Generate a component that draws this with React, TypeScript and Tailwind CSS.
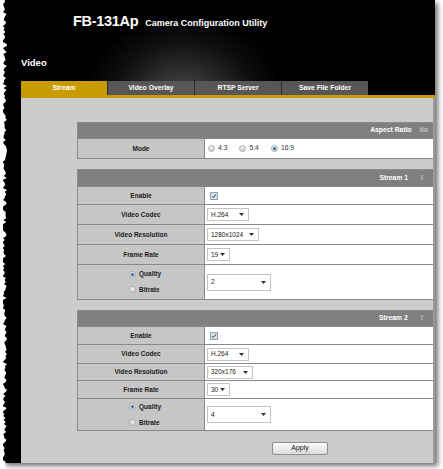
import React from 'react'

// jagged "torn paper" left edge of the screenshot
const tornPoints = (() => {
  let seed = 7
  const rnd = () => {
    seed = (seed * 9301 + 49297) % 233280
    return seed / 233280
  }
  const pts: string[] = ['0,0']
  for (let y = 0; y <= 469; y += 2) {
    pts.push(`${(2.5 + rnd() * 4.5).toFixed(1)},${y}`)
  }
  pts.push('0,469')
  return pts.join(' ')
})()

function Radio({ on = false }: { on?: boolean }) {
  return (
    <span className="inline-flex h-[7px] w-[7px] items-center justify-center rounded-full border border-[#a9a9a9] bg-gradient-to-b from-[#f4f4f4] to-[#d4d4d4]">
      {on && <span className="h-[3px] w-[3px] rounded-full bg-[#1f6fb8]" />}
    </span>
  )
}

function Check() {
  return (
    <span className="flex h-[8px] w-[8px] items-center justify-center border border-[#9aa3b0] bg-[#dde3ec]">
      <svg width="6" height="6" viewBox="0 0 6 6">
        <path d="M1 3.2 L2.4 4.6 L5 1.2" fill="none" stroke="#2a3a5a" strokeWidth="1" />
      </svg>
    </span>
  )
}

function Select({ value, w, tall = false }: { value: string; w: string; tall?: boolean }) {
  return (
    <div
      className={`flex items-center justify-between border border-[#c4c4c4] bg-white pl-[3px] pr-[4px] text-[6.5px] text-[#222] ${w} ${tall ? 'h-[17px]' : 'h-[13px]'}`}
    >
      <span>{value}</span>
      <svg width="5" height="3" viewBox="0 0 5 3">
        <path d="M0 0 H5 L2.5 3 Z" fill="#333" />
      </svg>
    </div>
  )
}

function Header({ title, tail, wide = false }: { title: string; tail: string; wide?: boolean }) {
  return (
    <div
      className={`flex h-full items-center justify-end bg-[#808080] text-[6.8px] font-bold text-white ${
        wide ? 'gap-[13px] pr-[12px]' : 'gap-[8px] pr-[7px]'
      }`}
    >
      <span>{title}</span>
      <span className="text-[#c8c8c8]">{tail}</span>
    </div>
  )
}

function Row({ h, label, children }: { h: string; label: React.ReactNode; children: React.ReactNode }) {
  return (
    <div className={`flex border-t border-[#8a8a8a] ${h}`}>
      <div className="flex w-[127px] shrink-0 items-center justify-center border-r border-[#8a8a8a] bg-[#c6c6c6] text-[6.5px] font-bold text-[#1a1a1a]">
        {label}
      </div>
      <div className="flex flex-1 items-center bg-white pl-[2px]">{children}</div>
    </div>
  )
}

type StreamProps = {
  name: string
  tail: string
  hs: string[]
  codec: string
  res: string
  resW: string
  fps: string
  q: string
}

function QB() {
  return (
    <div className="flex w-full flex-col gap-[6px] pl-[51px] text-[6.5px] font-bold">
      <div className="flex items-center gap-[3px]">
        <Radio on />
        <span>Quality</span>
      </div>
      <div className="flex items-center gap-[3px]">
        <Radio />
        <span>Bitrate</span>
      </div>
    </div>
  )
}

function Stream({ name, tail, hs, codec, res, resW, fps, q }: StreamProps) {
  return (
    <div className="w-[358px] border-b border-l border-t border-[#8a8a8a]">
      <div className={hs[0]}>
        <Header title={name} tail={tail} wide />
      </div>
      <Row h={hs[1]} label="Enable">
        <span className="pl-[3px]">
          <Check />
        </span>
      </Row>
      <Row h={hs[2]} label="Video Codec">
        <Select value={codec} w="w-[42px]" />
      </Row>
      <Row h={hs[3]} label="Video Resolution">
        <Select value={res} w={resW} />
      </Row>
      <Row h={hs[4]} label="Frame Rate">
        <Select value={fps} w="w-[23px]" />
      </Row>
      <Row h={hs[5]} label={<QB />}>
        <Select value={q} w="w-[64px]" tall />
      </Row>
    </div>
  )
}

const TABS = ['Stream', 'Video Overlay', 'RTSP Server', 'Save File Folder']

export default function App() {
  return (
    <div className="relative h-[469px] w-[443px] overflow-hidden bg-white font-['Liberation_Sans',Arial,sans-serif]">
      <div className="ml-[3px] h-[463px] w-[432px] bg-black shadow-[3px_3px_5px_rgba(0,0,0,0.55)]">
        {/* top banner */}
        <div className="relative h-[81px] overflow-hidden bg-black">
          <div className="absolute inset-0 bg-[radial-gradient(ellipse_100px_85px_at_180px_100px,rgba(130,130,130,0.6),rgba(50,50,50,0.3)_70%,transparent)]" />
          <div className="relative flex items-baseline gap-[7px] pl-[70px] pt-[11px] text-white">
            <span className="text-[14.5px] font-bold tracking-[-0.3px]">FB-131Ap</span>
            <span className="text-[9px] font-bold">Camera Configuration Utility</span>
          </div>
          <div className="relative pl-[18px] pt-[23px] text-[9.5px] font-bold text-white">Video</div>
        </div>

        <div className="flex">
          <div className="w-[18px] shrink-0" />
          <div className="w-[414px]">
            {/* tabs */}
            <div className="flex h-[14px]">
              {TABS.map((t, i) => (
                <div
                  key={t}
                  className={`flex h-full items-center justify-center text-[6.8px] font-bold text-white ${
                    i === 0 ? 'w-[86px] bg-[#c89b00]' : 'w-[87px] border-l border-[#2a2a2a] bg-[#575757]'
                  }`}
                >
                  {t}
                </div>
              ))}
            </div>
            <div className="h-[3px] bg-[#c89b00]" />

            {/* body */}
            <div className="h-[365px] overflow-hidden border-r-2 border-[#9a9a9a] bg-[#cccccc] pl-[56px] pt-[24px]">
              <div className="w-[358px] border-b border-l border-t border-[#8a8a8a]">
                <div className="h-[15px]">
                  <Header title="Aspect Ratio" tail="tio" />
                </div>
                <Row h="h-[20px]" label="Mode">
                  <div className="flex items-center gap-[12px] pl-[1px] text-[6.8px] text-[#333]">
                    <span className="flex items-center gap-[3px]">
                      <Radio />
                      4:3
                    </span>
                    <span className="flex items-center gap-[3px]">
                      <Radio />
                      5:4
                    </span>
                    <span className="flex items-center gap-[3px]">
                      <Radio on />
                      16:9
                    </span>
                  </div>
                </Row>
              </div>

              <div className="mt-[10px]">
                <Stream
                  name="Stream 1"
                  tail="I"
                  hs={['h-[16px]', 'h-[18px]', 'h-[20px]', 'h-[20px]', 'h-[20px]', 'h-[35px]']}
                  codec="H.264"
                  res="1280x1024"
                  resW="w-[52px]"
                  fps="19"
                  q="2"
                />
              </div>

              <div className="mt-[10px]">
                <Stream
                  name="Stream 2"
                  tail="!"
                  hs={['h-[15px]', 'h-[18px]', 'h-[19px]', 'h-[17px]', 'h-[18px]', 'h-[32px]']}
                  codec="H.264"
                  res="320x176"
                  resW="w-[46px]"
                  fps="30"
                  q="4"
                />
              </div>

              <div className="ml-[195px] mt-[11px] flex h-[13px] w-[56px] items-center justify-center rounded-[2px] border border-[#8f8f8f] bg-gradient-to-b from-[#fbfbfb] to-[#dcdcdc] text-[7px] text-[#111]">
                Apply
              </div>
            </div>
          </div>
        </div>
      </div>

      <svg className="absolute left-0 top-0" width="10" height="469" viewBox="0 0 10 469">
        <polygon points={tornPoints} fill="#ffffff" />
      </svg>
    </div>
  )
}
